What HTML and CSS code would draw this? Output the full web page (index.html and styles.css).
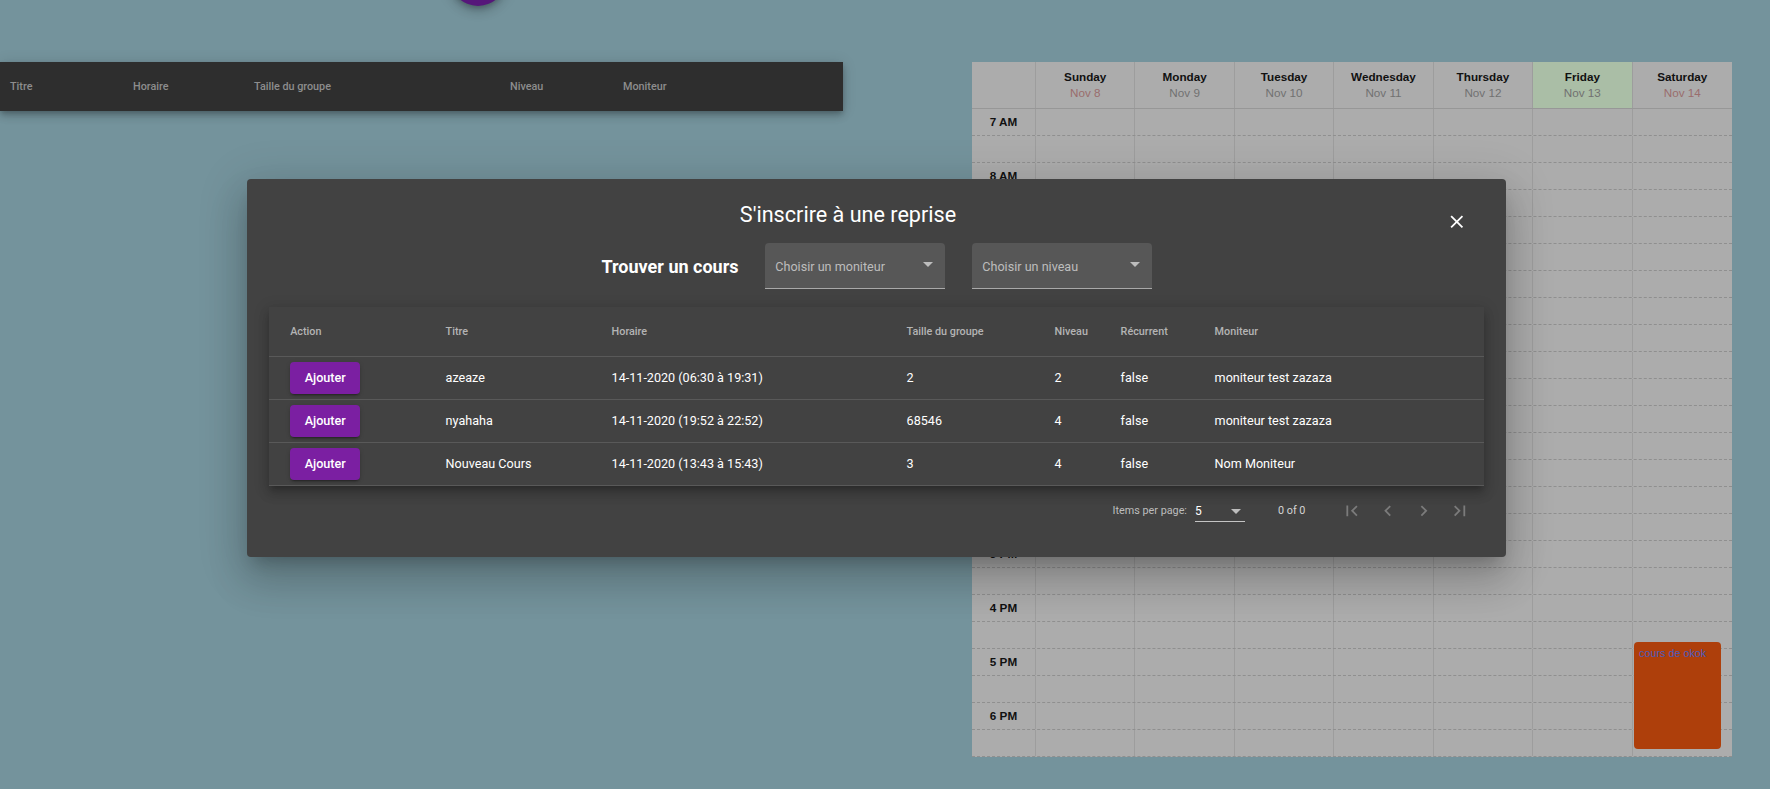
FILE: index.html
```html
<!DOCTYPE html>
<html lang="fr">
<head>
<meta charset="utf-8">
<title>Reprises</title>
<link rel="stylesheet" href="styles.css">
</head>
<body>
<div class="page">
  <div class="left">
    <button class="fab" aria-label="Ajouter"></button>
    <div class="list-bar">
      <span>Titre</span><span>Horaire</span><span>Taille du groupe</span><span>Niveau</span><span>Moniteur</span>
    </div>
  </div>

  <div class="calendar">
    <div class="cal-head">
      <div class="corner"></div>
      <div class="day"><b>Sunday</b><span class="date weekend">Nov 8</span></div>
      <div class="day"><b>Monday</b><span class="date">Nov 9</span></div>
      <div class="day"><b>Tuesday</b><span class="date">Nov 10</span></div>
      <div class="day"><b>Wednesday</b><span class="date">Nov 11</span></div>
      <div class="day"><b>Thursday</b><span class="date">Nov 12</span></div>
      <div class="day today"><b>Friday</b><span class="date">Nov 13</span></div>
      <div class="day"><b>Saturday</b><span class="date weekend">Nov 14</span></div>
    </div>
    <div class="cal-body">
      <div class="cal-row"><div class="time">7 AM</div><div></div><div></div><div></div><div></div><div></div><div></div><div></div></div>
      <div class="cal-row"><div class="time"></div><div></div><div></div><div></div><div></div><div></div><div></div><div></div></div>
      <div class="cal-row"><div class="time">8 AM</div><div></div><div></div><div></div><div></div><div></div><div></div><div></div></div>
      <div class="cal-row"><div class="time"></div><div></div><div></div><div></div><div></div><div></div><div></div><div></div></div>
      <div class="cal-row"><div class="time">9 AM</div><div></div><div></div><div></div><div></div><div></div><div></div><div></div></div>
      <div class="cal-row"><div class="time"></div><div></div><div></div><div></div><div></div><div></div><div></div><div></div></div>
      <div class="cal-row"><div class="time">10 AM</div><div></div><div></div><div></div><div></div><div></div><div></div><div></div></div>
      <div class="cal-row"><div class="time"></div><div></div><div></div><div></div><div></div><div></div><div></div><div></div></div>
      <div class="cal-row"><div class="time">11 AM</div><div></div><div></div><div></div><div></div><div></div><div></div><div></div></div>
      <div class="cal-row"><div class="time"></div><div></div><div></div><div></div><div></div><div></div><div></div><div></div></div>
      <div class="cal-row"><div class="time">12 PM</div><div></div><div></div><div></div><div></div><div></div><div></div><div></div></div>
      <div class="cal-row"><div class="time"></div><div></div><div></div><div></div><div></div><div></div><div></div><div></div></div>
      <div class="cal-row"><div class="time">1 PM</div><div></div><div></div><div></div><div></div><div></div><div></div><div></div></div>
      <div class="cal-row"><div class="time"></div><div></div><div></div><div></div><div></div><div></div><div></div><div></div></div>
      <div class="cal-row"><div class="time">2 PM</div><div></div><div></div><div></div><div></div><div></div><div></div><div></div></div>
      <div class="cal-row"><div class="time"></div><div></div><div></div><div></div><div></div><div></div><div></div><div></div></div>
      <div class="cal-row"><div class="time">3 PM</div><div></div><div></div><div></div><div></div><div></div><div></div><div></div></div>
      <div class="cal-row"><div class="time"></div><div></div><div></div><div></div><div></div><div></div><div></div><div></div></div>
      <div class="cal-row"><div class="time">4 PM</div><div></div><div></div><div></div><div></div><div></div><div></div><div></div></div>
      <div class="cal-row"><div class="time"></div><div></div><div></div><div></div><div></div><div></div><div></div><div></div></div>
      <div class="cal-row"><div class="time">5 PM</div><div></div><div></div><div></div><div></div><div></div><div></div><div></div></div>
      <div class="cal-row"><div class="time"></div><div></div><div></div><div></div><div></div><div></div><div></div><div></div></div>
      <div class="cal-row"><div class="time">6 PM</div><div></div><div></div><div></div><div></div><div></div><div></div><div></div></div>
      <div class="cal-row"><div class="time"></div><div></div><div></div><div></div><div></div><div></div><div></div><div></div></div>
      <div class="event">cours de okok</div>
    </div>
  </div>
</div>

<div class="dialog" role="dialog">
  <div class="dialog-head">
    <h2 class="dialog-title">S'inscrire à une reprise</h2>
    <button class="close" aria-label="Fermer">
      <svg viewBox="0 0 24 24"><path d="M19 6.41L17.59 5 12 10.59 6.41 5 5 6.41 10.59 12 5 17.59 6.41 19 12 13.41 17.59 19 19 17.59 13.41 12z"/></svg>
    </button>
  </div>

  <div class="search">
    <span class="search-label">Trouver un cours</span>
    <div class="select"><span>Choisir un moniteur</span><i class="arrow"></i></div>
    <div class="select"><span>Choisir un niveau</span><i class="arrow"></i></div>
  </div>

  <table class="courses">
    <colgroup>
      <col class="c-action"><col class="c-titre"><col class="c-horaire"><col class="c-taille"><col class="c-niveau"><col class="c-rec"><col>
    </colgroup>
    <thead>
      <tr><th>Action</th><th>Titre</th><th>Horaire</th><th>Taille du groupe</th><th>Niveau</th><th>Récurrent</th><th>Moniteur</th></tr>
    </thead>
    <tbody>
      <tr><td><button class="add">Ajouter</button></td><td>azeaze</td><td>14-11-2020 (06:30 à 19:31)</td><td>2</td><td>2</td><td>false</td><td>moniteur test zazaza</td></tr>
      <tr><td><button class="add">Ajouter</button></td><td>nyahaha</td><td>14-11-2020 (19:52 à 22:52)</td><td>68546</td><td>4</td><td>false</td><td>moniteur test zazaza</td></tr>
      <tr><td><button class="add">Ajouter</button></td><td>Nouveau Cours</td><td>14-11-2020 (13:43 à 15:43)</td><td>3</td><td>4</td><td>false</td><td>Nom Moniteur</td></tr>
    </tbody>
  </table>

  <div class="paginator">
    <span class="pp-label">Items per page:</span>
    <div class="pp-select"><span>5</span><i class="arrow small"></i></div>
    <span class="range">0 of 0</span>
    <button class="pg-btn" aria-label="First page"><svg viewBox="0 0 24 24"><path d="M18.41 16.59L13.820 12l4.59-4.59L17 6l-6 6 6 6zM6 6h2v12H6z"/></svg></button>
    <button class="pg-btn" aria-label="Previous page"><svg viewBox="0 0 24 24"><path d="M15.41 7.41L14 6l-6 6 6 6 1.41-1.41L10.83 12z"/></svg></button>
    <button class="pg-btn" aria-label="Next page"><svg viewBox="0 0 24 24"><path d="M10 6L8.59 7.41 13.17 12l-4.58 4.59L10 18l6-6z"/></svg></button>
    <button class="pg-btn" aria-label="Last page"><svg viewBox="0 0 24 24"><path d="M5.59 7.41L10.18 12l-4.59 4.59L7 18l6-6-6-6zM16 6h2v12h-2z"/></svg></button>
  </div>
</div>
</body>
</html>
```

FILE: styles.css
```css
* { box-sizing: border-box; }

html, body { margin: 0; }

body {
  width: 1770px;
  height: 789px;
  overflow: hidden;
  position: relative;
  background: #74939c;
  font-family: Roboto, "Liberation Sans", Arial, sans-serif;
}

/* ---------- page behind the dialog ---------- */
.page {
  display: flex;
  align-items: flex-start;
  padding-top: 62px;
}

.left {
  position: relative;
  flex: none;
  width: 843px;
}

.fab {
  position: absolute;
  left: 449.5px;
  top: -112.5px;
  width: 56px;
  height: 56px;
  border: 0;
  border-radius: 50%;
  background: #56177a;
  box-shadow: 0 3px 5px -1px rgba(0,0,0,.2), 0 6px 10px 0 rgba(0,0,0,.14), 0 1px 18px 0 rgba(0,0,0,.12);
}

.list-bar {
  height: 49px;
  display: grid;
  grid-template-columns: 123px 121px 256px 113px 1fr;
  align-items: center;
  padding-left: 10px;
  background: #2e2e2e;
  color: #8d8d8d;
  font-size: 10.8px;
  font-weight: 500;
  box-shadow: 0 3px 5px -1px rgba(0,0,0,.2), 0 5px 8px 0 rgba(0,0,0,.14), 0 1px 14px 0 rgba(0,0,0,.12);
}

/* ---------- calendar ---------- */
.calendar {
  flex: none;
  width: 760px;
  margin-left: 129px;
  background: #acacac;
  font-family: "Liberation Sans", Arial, sans-serif;
  font-size: 11.7px;
  color: #111;
}

.cal-head {
  display: grid;
  grid-template-columns: 64px repeat(7, 1fr);
  height: 47px;
  border-bottom: 1px solid #979797;
}

.cal-head > div {
  border-right: 1px solid #9d9d9d;
}

.cal-head > div:last-child,
.cal-row > div:last-child {
  border-right: 0;
}

.day {
  display: flex;
  flex-direction: column;
  align-items: center;
  justify-content: center;
  line-height: 16.5px;
}

.day b { font-weight: 700; }

.date { color: #717171; }
.date.weekend { color: #9a6d6d; }

.day.today { background: #aabea6; }

.cal-body { position: relative; }

.cal-row {
  display: grid;
  grid-template-columns: 64px repeat(7, 1fr);
  height: 27px;
  border-bottom: 1px dashed #8f8f8f;
}

.cal-row > div {
  border-right: 1px solid #9d9d9d;
}

.time {
  text-align: center;
  font-weight: 700;
  line-height: 26px;
}

.event {
  position: absolute;
  top: 533px;
  left: 662px;
  width: 87px;
  height: 107px;
  padding: 5px 5px;
  border-radius: 4px;
  background: #ae3f0b;
  color: #4a5bbd;
  font-size: 10.8px;
  line-height: 13px;
}

/* ---------- dialog ---------- */
.dialog {
  position: absolute;
  left: 247px;
  top: 179px;
  width: 1259px;
  height: 378px;
  padding: 21.6px 21.6px 0;
  background: #424242;
  border-radius: 4px;
  color: #fff;
  box-shadow: 0 11px 15px -7px rgba(0,0,0,.2), 0 24px 38px 3px rgba(0,0,0,.14), 0 9px 46px 8px rgba(0,0,0,.12);
}

.dialog-head {
  display: flex;
  align-items: flex-start;
  height: 28.8px;
}

.dialog-title {
  flex: 1;
  margin: 0;
  text-align: center;
  font-size: 21.6px;
  font-weight: 400;
  line-height: 28.8px;
}

.close {
  flex: none;
  width: 36px;
  height: 36px;
  margin: 3px 10px 0 11px;
  padding: 0;
  border: 0;
  background: transparent;
  display: flex;
  align-items: center;
  justify-content: center;
}

.close svg { width: 21.6px; height: 21.6px; fill: #fff; }

.search {
  display: flex;
  justify-content: center;
  align-items: center;
  margin-top: 14px;
}

.search-label {
  font-size: 18px;
  font-weight: 700;
  margin-right: 26px;
}

.select {
  width: 180px;
  height: 46px;
  display: flex;
  align-items: center;
  justify-content: space-between;
  padding: 1px 12px 0 10.8px;
  background: #575757;
  border-radius: 4px 4px 0 0;
  border-bottom: 1px solid #a9a9a9;
  color: #bdbdbd;
  font-size: 12.6px;
}

.select + .select { margin-left: 27px; }

.arrow {
  width: 0;
  height: 0;
  border-left: 5px solid transparent;
  border-right: 5px solid transparent;
  border-top: 5px solid #bdbdbd;
  margin-bottom: 3px;
}

/* table */
.courses {
  width: 100%;
  margin-top: 18px;
  border-collapse: collapse;
  table-layout: fixed;
  background: #424242;
  box-shadow: 0 5px 5px -3px rgba(0,0,0,.2), 0 8px 10px 1px rgba(0,0,0,.14), 0 3px 14px 2px rgba(0,0,0,.12);
}

.c-action { width: 177px; }
.c-titre { width: 166px; }
.c-horaire { width: 295px; }
.c-taille { width: 148px; }
.c-niveau { width: 66px; }
.c-rec { width: 94px; }

.courses th,
.courses td {
  padding: 0;
  text-align: left;
  border-bottom: 1px solid #595959;
  white-space: nowrap;
}

.courses th:first-child,
.courses td:first-child { padding-left: 21.6px; }

.courses th {
  height: 49px;
  font-size: 10.8px;
  font-weight: 500;
  color: #b4b4b4;
}

.courses td {
  height: 43px;
  font-size: 12.6px;
  color: #fff;
}

.add {
  width: 70px;
  height: 32px;
  padding: 0;
  border: 0;
  border-radius: 4px;
  background: #7b1fa2;
  color: #fff;
  font-family: Roboto, sans-serif;
  font-size: 12.6px;
  font-weight: 500;
  vertical-align: middle;
  box-shadow: 0 3px 1px -2px rgba(0,0,0,.2), 0 2px 2px 0 rgba(0,0,0,.14), 0 1px 5px 0 rgba(0,0,0,.12);
}

/* paginator */
.paginator {
  height: 50px;
  display: flex;
  justify-content: flex-end;
  align-items: center;
  padding-right: 7px;
  font-size: 10.8px;
  color: #bdbdbd;
}

.pp-select {
  width: 50px;
  height: 21px;
  margin-left: 8px;
  margin-top: 2px;
  padding: 0 4px 0 0;
  display: flex;
  align-items: center;
  justify-content: space-between;
  border-bottom: 1px solid #c4c4c4;
  color: #fff;
  font-size: 12px;
}

.arrow.small { margin-bottom: 0; }

.range {
  margin: 0 28px 0 33px;
  color: #d4d4d4;
}

.pg-btn {
  width: 36px;
  height: 36px;
  padding: 0;
  border: 0;
  background: transparent;
  display: flex;
  align-items: center;
  justify-content: center;
}

.pg-btn svg { width: 21.6px; height: 21.6px; fill: #7b7b7b; }
```
